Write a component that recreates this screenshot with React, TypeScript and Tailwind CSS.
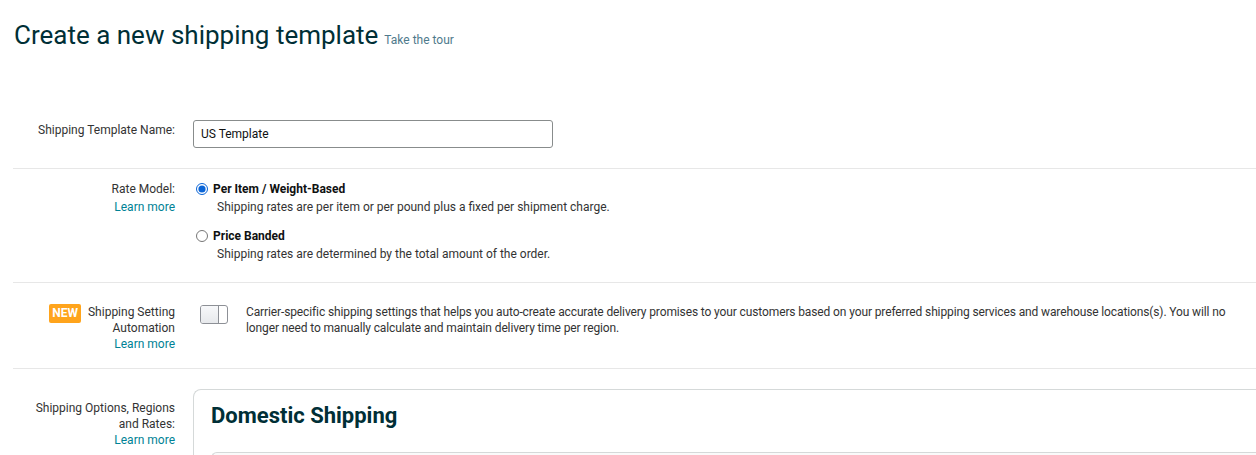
import React from 'react';

const font = { fontFamily: 'Roboto, "Liberation Sans", sans-serif' };

function Label({ children }: { children: React.ReactNode }) {
  return <div className="w-[162px] shrink-0 text-right text-[12px] leading-[16px] text-[#333]">{children}</div>;
}

function LearnMore() {
  return <a className="block text-[#008296]">Learn more</a>;
}

export default function App() {
  return (
    <main className="bg-white text-[#0f1111] min-h-[455px] overflow-hidden" style={font}>
      <div className="pl-[14px] pt-[18px] flex items-baseline">
        <h1 className="text-[26px] leading-[34px] font-normal text-[#002f36]">Create a new shipping template</h1>
        <a className="ml-[6px] text-[12px] text-[#4f7a8c]">Take the tour</a>
      </div>

      <div className="ml-[13px] mt-[68px]">
        {/* Template name */}
        <div className="flex items-start pb-[20px] border-b border-[#e7e7e7]">
          <Label>
            <div className="pt-[2px]">Shipping Template Name:</div>
          </Label>
          <input
            className="ml-[18px] w-[360px] h-[28px] border border-[#888c8c] rounded-[3px] px-[7px] text-[12px] text-[#0f1111]"
            defaultValue="US Template"
          />
        </div>

        {/* Rate model */}
        <div className="flex items-start pt-[12px] pb-[20px] border-b border-[#e7e7e7]">
          <Label>
            <div>Rate Model:</div>
            <div className="mt-[2px]"><LearnMore /></div>
          </Label>
          <div className="ml-[21px] text-[12px] leading-[16px]">
            <label className="flex items-center gap-[5px]">
              <input type="radio" name="rate" defaultChecked className="m-0 w-[12px] h-[12px] accent-[#0a64d6]" />
              <span className="font-bold">Per Item / Weight-Based</span>
            </label>
            <div className="ml-[21px] mt-[2px] text-[#333]">Shipping rates are per item or per pound plus a fixed per shipment charge.</div>
            <label className="flex items-center gap-[5px] mt-[13px]">
              <input type="radio" name="rate" className="m-0 w-[12px] h-[12px]" />
              <span className="font-bold">Price Banded</span>
            </label>
            <div className="ml-[21px] mt-[2px] text-[#333]">Shipping rates are determined by the total amount of the order.</div>
          </div>
        </div>

        {/* Automation */}
        <div className="flex items-start pt-[21px] pb-[16px] border-b border-[#e7e7e7]">
          <Label>
            <div className="flex justify-end items-start gap-[7px]">
              <span className="bg-[#ffa41c] text-white font-bold text-[12px] leading-[19px] px-[3px] rounded-[2px]">NEW</span>
              <span>Shipping Setting<br />Automation</span>
            </div>
            <LearnMore />
          </Label>
          <div className="ml-[25px] mt-[1px] w-[28px] h-[19px] rounded-[3px] border border-[#8d9096] bg-white flex overflow-hidden shrink-0">
            <div className="w-[18px] h-full bg-gradient-to-b from-[#f7f8fa] to-[#e7e9ec] border-r border-[#8d9096]" />
          </div>
          <div className="ml-[18px] text-[12px] leading-[16px] text-[#333] tracking-[-0.12px]">
            Carrier-specific shipping settings that helps you auto-create accurate delivery promises to your customers based on your preferred shipping services and warehouse locations(s). You will no longer need to manually calculate and maintain delivery time per region.
          </div>
        </div>

        {/* Shipping options */}
        <div className="flex items-start pt-[20px]">
          <Label>
            <div className="pt-[11px]">Shipping Options, Regions<br />and Rates:</div>
            <LearnMore />
          </Label>
          <div className="ml-[18px] flex-1 border border-[#d5d9d9] border-r-0 rounded-l-[8px] pl-[17px] pt-[12px] h-[80px]">
            <h2 className="text-[22px] leading-[28px] font-bold text-[#002f36]">Domestic Shipping</h2>
            <div className="mt-[22px] h-[20px] border border-[#d5d9d9] border-r-0 rounded-tl-[6px] bg-[#fafafa]" />
          </div>
        </div>
      </div>
    </main>
  );
}
